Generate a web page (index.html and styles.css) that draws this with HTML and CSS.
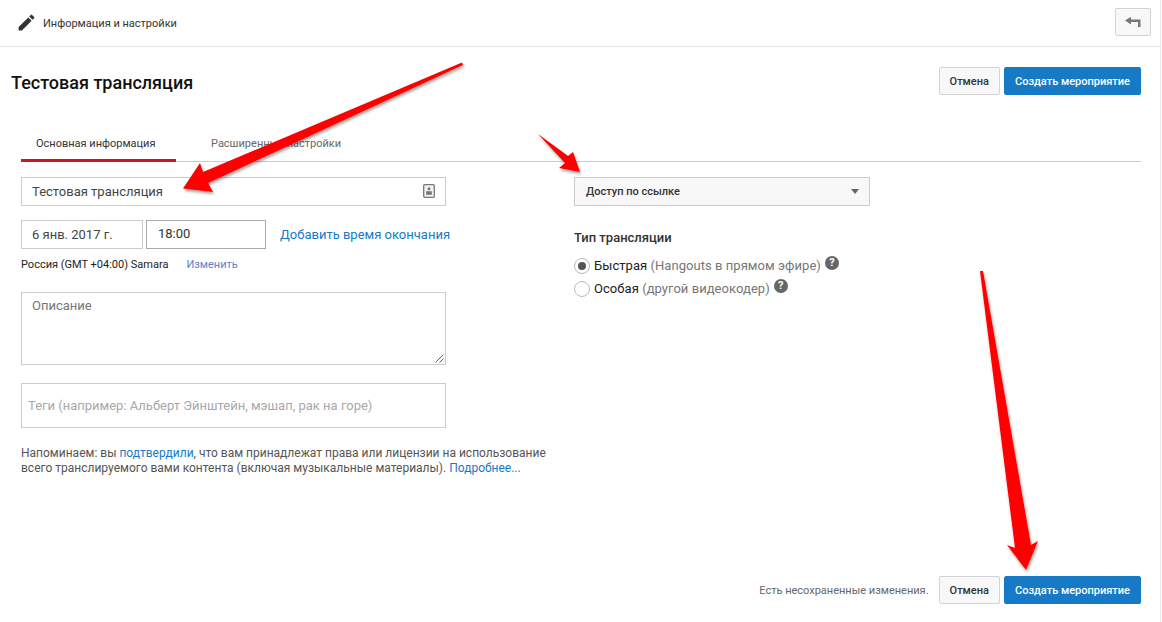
FILE: index.html
```html
<!DOCTYPE html>
<html lang="ru">
<head>
<meta charset="utf-8">
<title>Тестовая трансляция</title>
<link rel="stylesheet" href="styles.css">
</head>
<body>
<div class="page">
  <header class="topbar">
    <div class="topbar-title">
      <svg class="pencil" viewBox="0 0 24 24" width="21" height="21"><path d="M3 17.25V21h3.75L17.81 9.94l-3.75-3.75L3 17.25zM20.71 7.04a1 1 0 0 0 0-1.41l-2.34-2.34a1 1 0 0 0-1.41 0l-1.83 1.83 3.75 3.75 1.83-1.83z"/></svg>
      <span>Информация и настройки</span>
    </div>
    <button class="btn btn-back" type="button" aria-label="Назад">
      <svg viewBox="0 0 16 12" width="16" height="12"><path d="M0 4.500 6 .8v2.700h9.500V11H13V6H6v2.400z"/></svg>
    </button>
  </header>

  <div class="titlebar">
    <h1>Тестовая трансляция</h1>
    <div class="actions">
      <button class="btn" type="button">Отмена</button>
      <button class="btn btn-primary" type="button">Создать мероприятие</button>
    </div>
  </div>

  <nav class="tabs">
    <a class="tab tab-active">Основная информация</a>
    <a class="tab">Расширенные настройки</a>
  </nav>

  <main class="columns">
    <section class="col-left">
      <div class="field field-title">
        <span>Тестовая трансляция</span>
        <svg class="badge" viewBox="0 0 12 14" width="12" height="14"><rect x=".7" y=".7" width="10.6" height="12.6" rx="1" fill="#f3f3f3" stroke="#777" stroke-width="1.3"/><circle cx="6" cy="4.8" r="1.5" fill="#777"/><rect x="3.2" y="7.2" width="5.6" height="3.6" fill="#777"/></svg>
      </div>
      <div class="when">
        <div class="field field-date">6 янв. 2017 г.</div>
        <div class="field field-time">18:00</div>
        <a class="link link-end">Добавить время окончания</a>
      </div>
      <div class="tz">
        <span>Россия (GMT +04:00) Samara</span>
        <a class="link">Изменить</a>
      </div>
      <div class="field field-desc">
        <span>Описание</span>
        <svg class="grip" viewBox="0 0 9 9" width="9" height="9"><path d="M8.500.5l-8 8M8.500 4.500l-4 4" stroke="#666" stroke-width="1" fill="none"/></svg>
      </div>
      <div class="field field-tags">Теги (например: Альберт Эйнштейн, мэшап, рак на горе)</div>
      <p class="note">Напоминаем: вы <a class="link">подтвердили</a>, что вам принадлежат права или лицензии на использование всего транслируемого вами контента (включая музыкальные материалы). <a class="link">Подробнее...</a></p>
    </section>

    <section class="col-right">
      <div class="select">
        <span>Доступ по ссылке</span>
        <i class="caret"></i>
      </div>
      <h2>Тип трансляции</h2>
      <div class="radio-row">
        <i class="radio radio-on"></i>
        <span class="radio-label">Быстрая <em>(Hangouts в прямом эфире)</em></span>
        <i class="help">?</i>
      </div>
      <div class="radio-row">
        <i class="radio"></i>
        <span class="radio-label">Особая <em>(другой видеокодер)</em></span>
        <i class="help">?</i>
      </div>
    </section>
  </main>

  <footer class="footer">
    <span class="unsaved">Есть несохраненные изменения.</span>
    <button class="btn" type="button">Отмена</button>
    <button class="btn btn-primary" type="button">Создать мероприятие</button>
  </footer>
</div>

<svg class="arrows" viewBox="0 0 1162 622" width="1162" height="622" aria-hidden="true">
  <defs>
    <filter id="shadow" x="-20%" y="-20%" width="140%" height="140%">
      <feDropShadow dx="1" dy="2" stdDeviation="1.5" flood-color="#000" flood-opacity=".4"/>
    </filter>
  </defs>
  <g fill="#fe0000" filter="url(#shadow)">
    <path d="M462 62.500L463 65L208 183L213 192L183 188.500L200 163L203 172Z"/>
    <path d="M538 134L568 156L573 152L580 172L559 168L565 163Z"/>
    <path d="M980 271L983 271L1031 545L1038 541L1026 570L1007 545L1015 548Z"/>
  </g>
</svg>
</body>
</html>
```
FILE: styles.css
```css
* { box-sizing: border-box; }
html, body { margin: 0; padding: 0; background: #fff; overflow: hidden; }
body { font-family: Roboto, "Liberation Sans", sans-serif; color: #222; position: relative; width: 1162px; height: 622px; }
a { text-decoration: none; }
.page { width: 1161px; height: 622px; border-right: 1px solid #e8e8e8; display: flex; flex-direction: column; }

.topbar { height: 47px; border-bottom: 1px solid #e2e2e2; display: flex; align-items: center; justify-content: space-between; padding: 0 9px 0 16px; }
.topbar-title { display: flex; align-items: center; gap: 6px; font-size: 11px; color: #333; }
.pencil { fill: #333; margin-top: -2px; }
.btn { height: 28px; padding: 0 10px; border: 1px solid #d3d3d3; border-radius: 2px; background: #f8f8f8; font: 500 11px Roboto, "Liberation Sans", sans-serif; color: #333; white-space: nowrap; }
.btn-primary { background: #167ac6; border-color: #167ac6; color: #fff; }
.btn-back { width: 36px; display: flex; align-items: center; justify-content: center; padding: 0; margin-top: -3px; }
.btn-back svg { fill: #777; }

.titlebar { display: flex; justify-content: space-between; align-items: center; padding: 0 19px 0 11px; height: 68px; }
.titlebar h1 { margin: 2px 0 0; font-size: 18px; font-weight: 500; color: #111; }
.actions { display: flex; gap: 4px; }

.tabs { margin: 15px 19px 0 21px; height: 32px; border-bottom: 1px solid #ccc; display: flex; }
.tab { height: 32px; font-size: 11px; line-height: 28px; color: #666; padding: 0 15px; width: 155px; white-space: nowrap; }
.tab-active { color: #333; border-bottom: 3px solid #cc181e; }
.tab + .tab { margin-left: 20px; }

.columns { display: flex; padding: 15px 0 0 21px; }
.col-left { width: 553px; }
.col-right { width: 296px; }

.field { border: 1px solid #ccc; font-size: 13px; color: #444; display: flex; align-items: center; padding: 0 10px; }
.field-title { width: 425px; height: 29px; justify-content: space-between; padding-bottom: 1px; }
.when { display: flex; align-items: center; margin-top: 14px; }
.field-date { width: 122px; height: 29px; }
.field-time { width: 120px; height: 29px; margin-left: 3px; border-color: #aaa; font-size: 13px; color: #333; padding: 0 0 2px 11px; }
.link { color: #167ac6; }
.link-end { font-size: 13px; margin-left: 14px; }
.tz { display: flex; gap: 18px; margin-top: 9px; font-size: 11px; line-height: 14px; color: #222; }
.tz .link { color: #5b7fc9; }
.field-desc { position: relative; width: 425px; height: 73px; margin-top: 20px; align-items: flex-start; padding-top: 5px; color: #767676; }
.grip { position: absolute; right: 1px; bottom: 1px; }
.field-tags { width: 425px; height: 45px; margin-top: 18px; padding-left: 6px; color: #a8a8a8; }
.note { margin: 18px 0 0; width: 540px; font-size: 12px; line-height: 15px; color: #555; }

.select { height: 29px; border: 1px solid #ccc; background: #f8f8f8; display: flex; align-items: center; justify-content: space-between; padding: 0 10px 1px 11px; font-size: 11px; font-weight: 500; color: #333; }
.caret { width: 0; height: 0; border: 4px solid transparent; border-top: 5px solid #666; border-bottom: 0; }
.col-right h2 { margin: 23px 0 0; font-size: 13px; font-weight: 500; line-height: 17px; color: #333; }
.radio-row { display: flex; align-items: center; height: 23px; font-size: 13px; color: #222; }
.col-right h2 + .radio-row { margin-top: 8px; }
.radio { width: 16px; height: 16px; border: 1px solid #bbb; border-radius: 50%; margin-right: 4px; display: flex; align-items: center; justify-content: center; background: #fff; }
.radio-on::after { content: ""; width: 8px; height: 8px; border-radius: 50%; background: #555; }
.radio-label { letter-spacing: .05px; }
.radio-label em { font-style: normal; color: #767676; }
.help { width: 14px; height: 14px; border-radius: 50%; background: #666; color: #fff; font: 700 11px/14px Roboto, "Liberation Sans", sans-serif; text-align: center; margin: -5px 0 0 4px; }

.footer { margin-top: auto; padding: 0 19px 18px 0; display: flex; justify-content: flex-end; align-items: center; gap: 4px; }
.unsaved { font-size: 11px; color: #666; margin-right: 6px; }

.arrows { position: absolute; left: 0; top: 0; pointer-events: none; }
```
